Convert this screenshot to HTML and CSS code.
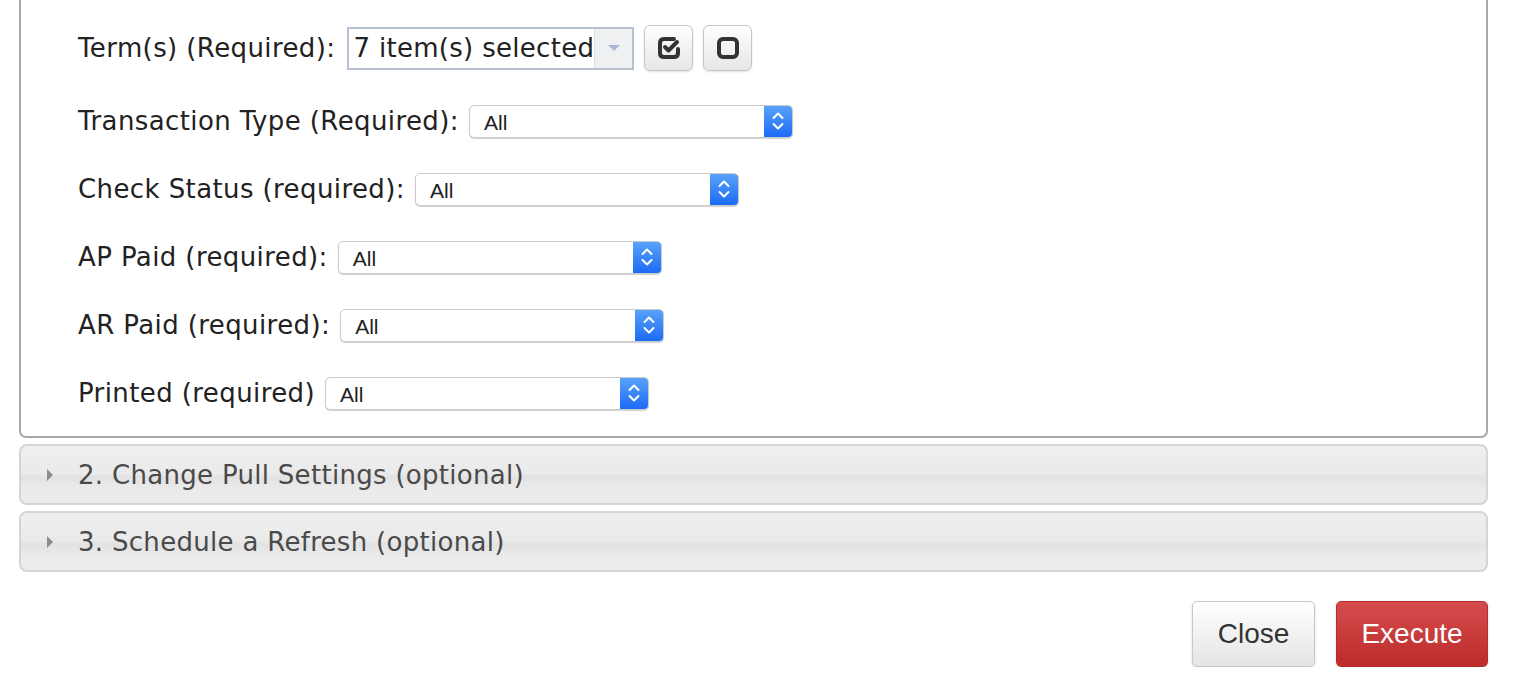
FILE: index.html
```html
<!DOCTYPE html>
<html>
<head>
<meta charset="utf-8">
<link rel="stylesheet" href="styles.css">
</head>
<body>
<div class="page">
  <div class="panel">
    <div class="row row-first">
      <span class="label">Term(s) (Required):</span>
      <div class="multi">
        <span class="multi-text">7 item(s) selected</span>
        <span class="multi-arrow"><span class="tri-down"></span></span>
      </div>
      <button class="icon-btn" type="button">
        <svg width="24" height="24" viewBox="0 0 24 24"><path d="M17 3H7Q3 3 3 7V17Q3 21 7 21H17Q21 21 21 17V13" fill="none" stroke="#333" stroke-width="4" stroke-linecap="round"/><path d="M8 11L11.5 14.5L20 6" fill="none" stroke="#333" stroke-width="4" stroke-linecap="round" stroke-linejoin="round"/></svg>
      </button>
      <button class="icon-btn" type="button">
        <svg width="24" height="24" viewBox="0 0 24 24"><rect x="3" y="3" width="18" height="18" rx="4" fill="none" stroke="#333" stroke-width="4"/></svg>
      </button>
    </div>
    <div class="row">
      <span class="label">Transaction Type (Required):</span>
      <div class="sel"><span class="sel-text">All</span><span class="sel-btn"><svg width="14" height="22" viewBox="0 0 14 22"><path d="M2.5 8L7 3.5L11.5 8M2.5 14L7 18.5L11.5 14" fill="none" stroke="#fff" stroke-width="2" stroke-linecap="round" stroke-linejoin="round"/></svg></span></div>
    </div>
    <div class="row">
      <span class="label">Check Status (required):</span>
      <div class="sel"><span class="sel-text">All</span><span class="sel-btn"><svg width="14" height="22" viewBox="0 0 14 22"><path d="M2.5 8L7 3.5L11.5 8M2.5 14L7 18.5L11.5 14" fill="none" stroke="#fff" stroke-width="2" stroke-linecap="round" stroke-linejoin="round"/></svg></span></div>
    </div>
    <div class="row">
      <span class="label">AP Paid (required):</span>
      <div class="sel"><span class="sel-text">All</span><span class="sel-btn"><svg width="14" height="22" viewBox="0 0 14 22"><path d="M2.5 8L7 3.5L11.5 8M2.5 14L7 18.5L11.5 14" fill="none" stroke="#fff" stroke-width="2" stroke-linecap="round" stroke-linejoin="round"/></svg></span></div>
    </div>
    <div class="row">
      <span class="label">AR Paid (required):</span>
      <div class="sel"><span class="sel-text">All</span><span class="sel-btn"><svg width="14" height="22" viewBox="0 0 14 22"><path d="M2.5 8L7 3.5L11.5 8M2.5 14L7 18.5L11.5 14" fill="none" stroke="#fff" stroke-width="2" stroke-linecap="round" stroke-linejoin="round"/></svg></span></div>
    </div>
    <div class="row">
      <span class="label">Printed (required)</span>
      <div class="sel"><span class="sel-text">All</span><span class="sel-btn"><svg width="14" height="22" viewBox="0 0 14 22"><path d="M2.5 8L7 3.5L11.5 8M2.5 14L7 18.5L11.5 14" fill="none" stroke="#fff" stroke-width="2" stroke-linecap="round" stroke-linejoin="round"/></svg></span></div>
    </div>
  </div>
  <div class="acc"><span class="tri-right"></span><span class="acc-title">2. Change Pull Settings (optional)</span></div>
  <div class="acc"><span class="tri-right"></span><span class="acc-title">3. Schedule a Refresh (optional)</span></div>
  <div class="actions">
    <button class="btn btn-close" type="button">Close</button>
    <button class="btn btn-exec" type="button">Execute</button>
  </div>
</div>
</body>
</html>
```

FILE: styles.css
```css
html, body {
  margin: 0;
  padding: 0;
  background: #fff;
}
.page {
  width: 1469px;
  margin-left: 19px;
  font-family: "DejaVu Sans", Verdana, sans-serif;
}
.panel {
  border: 2px solid #a8a8a8;
  border-top: none;
  border-radius: 0 0 7px 7px;
  padding: 25px 0 20px 57px;
  display: flex;
  flex-direction: column;
  gap: 22px;
}
.row {
  display: flex;
  align-items: center;
  height: 46px;
  gap: 10px;
}
.row-first {
  margin-bottom: 5px;
}
.label {
  font-size: 26px;
  letter-spacing: 0.4px;
  color: #222;
  white-space: nowrap;
}
.multi {
  display: flex;
  width: 287px;
  height: 43px;
  box-sizing: border-box;
  border: 2px solid #b9c0cf;
  background: #fff;
  margin-left: 2px;
}
.multi-text {
  flex: 1;
  font-size: 26px;
  letter-spacing: 0.3px;
  color: #222;
  padding-left: 4px;
  line-height: 39px;
  white-space: nowrap;
}
.multi-arrow {
  width: 37px;
  background: #eef0f2;
  border-left: 1px solid #dde0e4;
  display: flex;
  align-items: center;
  justify-content: center;
}
.tri-down {
  width: 0;
  height: 0;
  border-left: 6px solid transparent;
  border-right: 6px solid transparent;
  border-top: 6px solid #a9b8d2;
}
.icon-btn {
  width: 49px;
  height: 46px;
  border: 1px solid #c6c6c6;
  border-radius: 6px;
  background: linear-gradient(#ffffff, #e6e6e6);
  box-shadow: 0 1px 2px rgba(0,0,0,0.12);
  display: flex;
  align-items: center;
  justify-content: center;
  padding: 0;
}
.sel {
  display: flex;
  width: 324px;
  height: 33px;
  box-sizing: border-box;
  border: 1px solid #cbcbcb;
  border-radius: 5px;
  background: #fff;
  box-shadow: 0 1px 1px rgba(0,0,0,0.18);
  overflow: hidden;
}
.sel-text {
  flex: 1;
  font-family: "Liberation Sans", Arial, sans-serif;
  font-size: 21px;
  color: #222;
  padding-left: 14px;
  line-height: 33px;
}
.sel-btn {
  width: 28px;
  background: linear-gradient(#58a2fb, #1c6bf4);
  display: flex;
  align-items: center;
  justify-content: center;
}
.acc {
  margin-top: 6px;
  height: 61px;
  box-sizing: border-box;
  border: 2px solid #d5d5d5;
  border-radius: 8px;
  background: linear-gradient(#efefef 0%, #eaeaea 48%, #e2e2e2 55%, #ebebeb 75%, #ececec 100%);
  display: flex;
  align-items: center;
  padding-left: 26px;
}
.tri-right {
  width: 0;
  height: 0;
  border-top: 6px solid transparent;
  border-bottom: 6px solid transparent;
  border-left: 6px solid #8c8c8c;
  margin-right: 25px;
}
.acc-title {
  font-size: 26px;
  letter-spacing: 0.3px;
  color: #4a4a4a;
  white-space: nowrap;
}
.actions {
  display: flex;
  justify-content: flex-end;
  gap: 21px;
  margin-top: 29px;
}
.btn {
  height: 66px;
  border-radius: 5px;
  font-family: "Liberation Sans", Arial, sans-serif;
  font-size: 28px;
  padding: 0;
  box-shadow: 0 1px 3px rgba(0,0,0,0.15);
}
.btn-close {
  width: 123px;
  border: 1px solid #c8c8c8;
  background: linear-gradient(#ffffff, #e4e4e4);
  color: #333;
}
.btn-exec {
  width: 152px;
  border: 1px solid #b52d2d;
  background: linear-gradient(#d54c4c, #bd2b2b);
  color: #fff;
}
```
